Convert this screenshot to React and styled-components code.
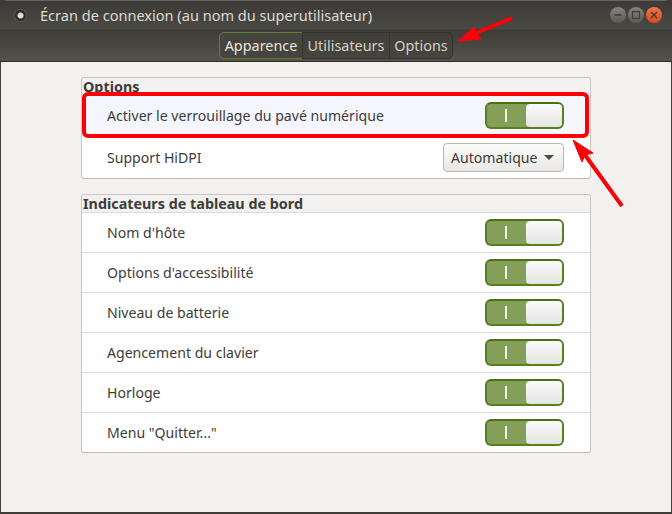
import React from 'react';
import styled, { createGlobalStyle } from 'styled-components';

const GlobalStyle = createGlobalStyle`
	html, body { margin: 0; padding: 0; background: #3c3b37; }
	body { font-family: "Noto Sans", "Open Sans", sans-serif; font-size: 14px; }
`;

const Window = styled.div`
	position: relative;
	width: 672px;
	height: 514px;
	overflow: hidden;
	box-sizing: border-box;
	display: flex;
	flex-direction: column;
	background: #3f3e39;
	border-radius: 7px 7px 0 0;
`;

const Header = styled.div`
	height: 62px;
	flex: none;
	box-sizing: border-box;
	border-top: 1px solid #66645c;
	border-bottom: 1px solid #2f2e2a;
	background: linear-gradient(#3c3b37, #4a4943 28px, #3d3c37 29px, #54524b);
	display: flex;
	flex-direction: column;
`;

const TitleRow = styled.div`
	height: 28px;
	flex: none;
	display: flex;
	align-items: center;
	padding: 0 10px 0 14px;
	color: #dfdbd2;
`;

const TitleIcon = styled.span`
	width: 13px;
	height: 13px;
	border-radius: 50%;
	background: radial-gradient(circle, #e0ded8 0 2.5px, #2f2e2a 3.5px 5px, #65635b 6.5px);
	margin-right: 13px;
`;

const Title = styled.span`
	flex: 1;
	font-size: 14.55px;
	padding-bottom: 1px;
`;

const Controls = styled.div`
	display: flex;
	gap: 2px;
`;

const WinButton = styled.span`
	width: 16px;
	height: 16px;
	border-radius: 50%;
	display: flex;
	align-items: center;
	justify-content: center;
	background: ${(p) => (p.$close ? 'linear-gradient(#f0774a, #d9481c)' : 'linear-gradient(#85837b, #5c5a53)')};
	color: #3c3b37;
`;

const Tabs = styled.div`
	display: flex;
	justify-content: center;
	height: 28px;
	margin-top: 3px;
`;

const Tab = styled.div`
	box-sizing: border-box;
	height: 27px;
	width: ${(p) => p.$w}px;
	padding-bottom: 1px;
	display: flex;
	align-items: center;
	justify-content: center;
	font-size: 14.4px;
	color: ${(p) => (p.$active ? '#e8e5dd' : '#d5d1c7')};
	background: ${(p) => (p.$active ? '#45443e' : 'linear-gradient(#403f3a, #45443e)')};
	border: 1px solid ${(p) => (p.$active ? '#5f7f35' : '#35342f')};
	margin-left: ${(p) => (p.$active ? 0 : -1)}px;
	border-radius: ${(p) => p.$radius || 0};
`;

const Content = styled.div`
	flex: 1;
	background: #f2f1ef;
	margin: 0 1px 2px 1px;
	padding: 15px 80px 0 80px;
	display: flex;
	flex-direction: column;
	gap: 15px;
`;

const Panel = styled.section`
	background: #fff;
	border: 1px solid #c9c6c1;
	border-bottom-color: #bdbab5;
	border-radius: 3px;
`;

const PanelTitle = styled.h2`
	margin: 0;
	height: 17px;
	padding-left: 1px;
	background: #f2f1ef;
	border-bottom: 1px solid #dcdad6;
	border-radius: 3px 3px 0 0;
	font-size: 14.35px;
	line-height: 17px;
	font-weight: 700;
	color: #3d3c38;
`;

const Row = styled.div`
	box-sizing: border-box;
	height: ${(p) => p.$h || 40}px;
	display: flex;
	align-items: center;
	justify-content: space-between;
	padding: 0 26px 0 25px;
	color: #3c3b37;
	font-size: 14.1px;
	background: ${(p) => (p.$tint ? '#f5f6fd' : 'transparent')};
	border-bottom: 1px solid #dcdad6;
	&:last-child { border-bottom: 0; }
`;

const Switch = styled.div`
	box-sizing: border-box;
	width: 79px;
	height: 27px;
	border: 2px solid #55801f;
	border-top-color: #4a7215;
	border-radius: 6px;
	background: #84a058;
	position: relative;
	display: flex;
	align-items: center;
	justify-content: flex-end;
`;

const SwitchMark = styled.span`
	position: absolute;
	left: 18px;
	top: 5px;
	width: 2px;
	height: 13px;
	background: #f2f6ec;
`;

const Knob = styled.span`
	width: 36px;
	height: 23px;
	border-radius: 4px;
	background: linear-gradient(#fafafa, #e6e5e3);
`;

const Combo = styled.div`
	box-sizing: border-box;
	width: 121px;
	height: 29px;
	display: flex;
	align-items: center;
	justify-content: space-between;
	padding: 0 9px 0 7px;
	border: 1px solid #b9b6b0;
	border-radius: 4px;
	background: linear-gradient(#fbfbfa, #e9e8e5);
	font-size: 14.1px;
	color: #3c3b37;
`;

const Caret = styled.span`
	width: 0;
	height: 0;
	border-left: 5px solid transparent;
	border-right: 5px solid transparent;
	border-top: 5px solid #4c4b47;
`;

const Highlight = styled.div`
	position: absolute;
	left: 82px;
	top: 92px;
	width: 507px;
	height: 46px;
	box-sizing: border-box;
	border: 4px solid #fb0007;
	border-radius: 6px;
`;

const Annotation = styled.svg`
	position: absolute;
	left: 0;
	top: 0;
	width: 672px;
	height: 514px;
	pointer-events: none;
`;

const ToggleSwitch = () => (
	<Switch>
		<SwitchMark />
		<Knob />
	</Switch>
);

const indicators = [
	"Nom d'hôte",
	"Options d'accessibilité",
	'Niveau de batterie',
	'Agencement du clavier',
	'Horloge',
	'Menu "Quitter..."'
];

const App = () => {
	return (
		<Window>
			<GlobalStyle />
			<Header>
				<TitleRow>
					<TitleIcon />
					<Title>Écran de connexion (au nom du superutilisateur)</Title>
					<Controls>
						<WinButton>
							<svg width="10" height="10" viewBox="0 0 10 10">
								<path d="M1.5 5h7" stroke="currentColor" strokeWidth="1.3" />
							</svg>
						</WinButton>
						<WinButton>
							<svg width="10" height="10" viewBox="0 0 10 10">
								<rect x="1.5" y="1.5" width="7" height="7" fill="none" stroke="currentColor" strokeWidth="1.2" />
							</svg>
						</WinButton>
						<WinButton $close>
							<svg width="10" height="10" viewBox="0 0 10 10">
								<path d="M2 2l6 6M8 2l-6 6" stroke="currentColor" strokeWidth="1.4" />
							</svg>
						</WinButton>
					</Controls>
				</TitleRow>
				<Tabs>
					<Tab $active $w={84} $radius="5px 0 0 5px">Apparence</Tab>
					<Tab $w={88}>Utilisateurs</Tab>
					<Tab $w={64} $radius="0 5px 5px 0">Options</Tab>
				</Tabs>
			</Header>
			<Content>
				<Panel>
					<PanelTitle>Options</PanelTitle>
					<Row $tint>
						Activer le verrouillage du pavé numérique
						<ToggleSwitch />
					</Row>
					<Row $h={42}>
						Support HiDPI
						<Combo>
							Automatique
							<Caret />
						</Combo>
					</Row>
				</Panel>
				<Panel>
					<PanelTitle>Indicateurs de tableau de bord</PanelTitle>
					{indicators.map((label, i) => (
						<Row key={label} $h={i === indicators.length - 1 ? 39 : 40}>
							{label}
							<ToggleSwitch />
						</Row>
					))}
				</Panel>
			</Content>
			<Highlight />
			<Annotation viewBox="0 0 672 514">
				<path d="M512 18L476 33" stroke="#fb0007" strokeWidth="4" fill="none" />
				<path d="M458 41L474 27L476 33L482 39Z" fill="#fb0007" stroke="#fb0007" strokeWidth="1" />
				<path d="M622 206L585 155" stroke="#fb0007" strokeWidth="4" fill="none" />
				<path d="M573 140L593 153L585 155L582 162Z" fill="#fb0007" stroke="#fb0007" strokeWidth="1" />
			</Annotation>
		</Window>
	);
};

export default App;
